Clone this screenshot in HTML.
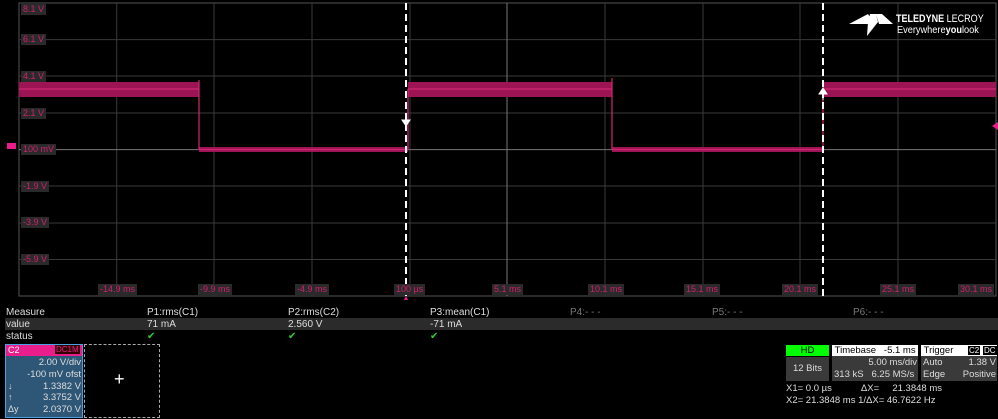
<!DOCTYPE html>
<html><head><meta charset="utf-8"><style>
body{margin:0;background:#000;width:998px;height:419px;overflow:hidden;font-family:"Liberation Sans",sans-serif;color:#ddd;position:relative}
.a{position:absolute}
.lbl{position:absolute;background:#2a2a2a;color:#d0206e;font-size:9px;padding:0 2px;line-height:11px}
.t{font-size:10px;position:absolute;white-space:nowrap}
</style></head><body>
<svg class="a" style="left:0;top:0" width="998" height="300">
<rect x="0" y="0" width="998" height="300" fill="#000"/>
<rect x="19" y="3" width="977" height="293" fill="none" stroke="#555" stroke-width="1"/>
<g stroke="#3a3a3a" stroke-width="1">
<line x1="116.7" y1="3" x2="116.7" y2="296"/><line x1="214" y1="3" x2="214" y2="296"/><line x1="312" y1="3" x2="312" y2="296"/><line x1="410" y1="3" x2="410" y2="296"/><line x1="605" y1="3" x2="605" y2="296"/><line x1="703" y1="3" x2="703" y2="296"/><line x1="800" y1="3" x2="800" y2="296"/><line x1="898" y1="3" x2="898" y2="296"/>
<line x1="19" y1="39.6" x2="996" y2="39.6"/><line x1="19" y1="76" x2="996" y2="76"/><line x1="19" y1="113" x2="996" y2="113"/><line x1="19" y1="186" x2="996" y2="186"/><line x1="19" y1="223" x2="996" y2="223"/><line x1="19" y1="259.5" x2="996" y2="259.5"/>
</g>
<g stroke="#777"><line x1="507" y1="3" x2="507" y2="296"/><line x1="19" y1="149.6" x2="996" y2="149.6"/></g>
<g fill="#9c1454">
<rect x="19" y="82" width="180" height="15"/>
<rect x="408" y="82" width="204" height="15"/>
<rect x="823" y="82" width="173" height="15"/>
<rect x="199" y="147" width="209" height="5"/>
<rect x="612" y="147" width="211" height="5"/>
</g>
<g stroke="#d02870" stroke-width="1.2">
<line x1="19" y1="89" x2="199" y2="89"/><line x1="408" y1="89" x2="612" y2="89"/><line x1="823" y1="89" x2="996" y2="89"/>
<line x1="199" y1="80" x2="199" y2="150"/><line x1="408" y1="89" x2="408" y2="150"/><line x1="612" y1="78" x2="612" y2="150"/><line x1="823" y1="89" x2="823" y2="150"/>
<line x1="199" y1="149.5" x2="408" y2="149.5"/><line x1="612" y1="149.5" x2="823" y2="149.5"/>
</g>
<g stroke="#fff" stroke-width="2" stroke-dasharray="7,4">
<line x1="406" y1="3" x2="406" y2="296"/><line x1="823" y1="3" x2="823" y2="296"/>
</g>
<path d="M402 120 L410 120 L406 126Z M406 114 V122" stroke="#fff" fill="#fff"/>
<path d="M819 94 L827 94 L823 88Z M823 92 V100" stroke="#fff" fill="#fff"/>
<path d="M403 302 L409 302 L406 296Z" fill="#e91e8c"/>
<path d="M998 122 L992 126 L998 130Z" fill="#e91e8c"/>
<rect x="7" y="143" width="9" height="6" fill="#e91e8c"/>
<path d="M849 24 L868 14 L874 24Z M870 14 L876 14 L878 22 L867 36 L868 22Z M876 14 L882 14 L893 24 L879 24Z" fill="#fff"/>
</svg>
<div class="lbl" style="left:21px;top:4px">8.1 V</div>
<div class="lbl" style="left:21px;top:34px">6.1 V</div>
<div class="lbl" style="left:21px;top:71px">4.1 V</div>
<div class="lbl" style="left:21px;top:108px">2.1 V</div>
<div class="lbl" style="left:21px;top:144px">100 mV</div>
<div class="lbl" style="left:21px;top:181px">-1.9 V</div>
<div class="lbl" style="left:21px;top:217px">-3.9 V</div>
<div class="lbl" style="left:21px;top:254px">-5.9 V</div>
<div class="lbl" style="left:98px;top:284px">-14.9 ms</div>
<div class="lbl" style="left:198px;top:284px">-9.9 ms</div>
<div class="lbl" style="left:295px;top:284px">-4.9 ms</div>
<div class="lbl" style="left:394px;top:284px">100 µs</div>
<div class="lbl" style="left:492px;top:284px">5.1 ms</div>
<div class="lbl" style="left:588px;top:284px">10.1 ms</div>
<div class="lbl" style="left:684px;top:284px">15.1 ms</div>
<div class="lbl" style="left:782px;top:284px">20.1 ms</div>
<div class="lbl" style="left:880px;top:284px">25.1 ms</div>
<div class="lbl" style="left:958px;top:284px">30.1 ms</div>
<div class="t" style="left:896px;top:13px;color:#fff;font-size:11px;font-weight:bold;transform:scaleX(0.82);transform-origin:left">TELEDYNE <span style="font-weight:normal">LECROY</span></div>
<div class="t" style="left:897px;top:25px;color:#fff;font-size:10px;transform:scaleX(0.92);transform-origin:left">Everywhere<b>you</b>look</div>
<div class="a" style="left:5px;top:318px;width:993px;height:12px;background:#2b2b2b"></div>
<div class="t" style="left:6px;top:307px">Measure</div>
<div class="t" style="left:147px;top:307px">P1:rms(C1)</div>
<div class="t" style="left:288px;top:307px">P2:rms(C2)</div>
<div class="t" style="left:430px;top:307px">P3:mean(C1)</div>
<div class="t" style="left:570px;top:307px;color:#777">P4:- - -</div>
<div class="t" style="left:712px;top:307px;color:#777">P5:- - -</div>
<div class="t" style="left:853px;top:307px;color:#777">P6:- - -</div>
<div class="t" style="left:6px;top:319px">value</div>
<div class="t" style="left:147px;top:319px">71 mA</div>
<div class="t" style="left:288px;top:319px">2.560 V</div>
<div class="t" style="left:430px;top:319px">-71 mA</div>
<div class="t" style="left:6px;top:331px">status</div>
<div class="t" style="left:147px;top:331px;color:#3c3">✔</div>
<div class="t" style="left:288px;top:331px;color:#3c3">✔</div>
<div class="t" style="left:430px;top:331px;color:#3c3">✔</div>
<div class="a" style="left:5px;top:344px;width:76px;height:72px;background:#2e5777;border:1px solid #4aa0e0"></div>
<div class="a" style="left:6px;top:345px;width:76px;height:11px;background:#e91e8c"></div>
<div class="t" style="left:8px;top:345px;color:#fff;font-size:9px">C2</div>
<div class="t" style="left:55px;top:345px;background:#300;color:#e91e8c;font-size:8px;padding:0 1px">DC1M</div>
<div class="t" style="right:917px;top:357px;font-size:9.5px">2.00 V/div</div>
<div class="t" style="right:917px;top:369px;font-size:9.5px">-100 mV ofst</div>
<div class="t" style="right:917px;top:381px;font-size:9.5px">1.3382 V</div>
<div class="t" style="right:917px;top:392px;font-size:9.5px">3.3752 V</div>
<div class="t" style="right:917px;top:404px;font-size:9.5px">2.0370 V</div>
<div class="t" style="left:8px;top:381px;font-size:9px">↓</div>
<div class="t" style="left:8px;top:392px;font-size:9px">↑</div>
<div class="t" style="left:8px;top:404px;font-size:9px">Δy</div>
<div class="a" style="left:84px;top:344px;width:74px;height:72px;border:1px dashed #aaa"></div>
<div class="t" style="left:114px;top:369px;color:#fff;font-size:18px">+</div>
<div class="a" style="left:786px;top:345px;width:43px;height:11px;background:#00ff00;color:#000;font-size:9.5px;text-align:center;line-height:11px">HD</div>
<div class="a" style="left:786px;top:357px;width:43px;height:24px;background:#3a3a3a;font-size:9.5px;text-align:center;line-height:24px">12 Bits</div>
<div class="a" style="left:832px;top:345px;width:86px;height:36px;background:#3a3a3a"></div>
<div class="a" style="left:832px;top:345px;width:86px;height:11px;background:#fff;color:#000;font-size:9.5px;line-height:11px">&nbsp;Timebase&nbsp;&nbsp; -5.1 ms</div>
<div class="t" style="right:81px;top:357px;font-size:9.5px">5.00 ms/div</div>
<div class="t" style="left:834px;top:369px;font-size:9.5px">313 kS&nbsp;&nbsp; 6.25 MS/s</div>
<div class="a" style="left:921px;top:345px;width:76px;height:36px;background:#3a3a3a"></div>
<div class="a" style="left:921px;top:345px;width:76px;height:11px;background:#fff;color:#000;font-size:9.5px;line-height:11px">&nbsp;Trigger</div>
<div class="t" style="left:968px;top:346px;background:#000;color:#fff;font-size:8px;line-height:9px;padding:0 1px">C2</div>
<div class="t" style="left:983px;top:346px;background:#000;color:#fff;font-size:8px;line-height:9px;padding:0 1px">DC</div>
<div class="t" style="left:923px;top:357px;font-size:9.5px">Auto</div>
<div class="t" style="right:2px;top:357px;font-size:9.5px">1.38 V</div>
<div class="t" style="left:923px;top:369px;font-size:9.5px">Edge</div>
<div class="t" style="right:2px;top:369px;font-size:9.5px">Positive</div>
<div class="t" style="left:786px;top:383px;font-size:9.5px">X1= 0.0 µs&nbsp;&nbsp;&nbsp;&nbsp;&nbsp;&nbsp;&nbsp;&nbsp;&nbsp;&nbsp; ΔX=&nbsp;&nbsp;&nbsp;&nbsp; 21.3848 ms</div>
<div class="t" style="left:786px;top:395px;font-size:9.5px">X2= 21.3848 ms 1/ΔX= 46.7622 Hz</div>
</body></html>
